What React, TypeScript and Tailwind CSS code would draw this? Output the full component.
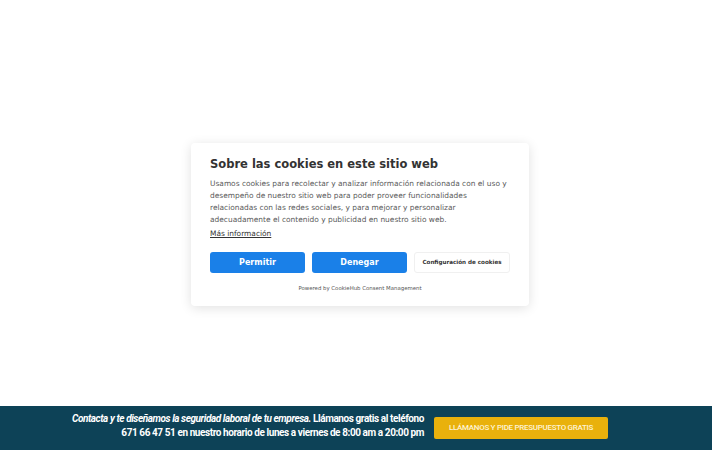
import React from "react";

export default function App() {
  return (
    <div className="relative w-[720px] h-[450px] bg-white overflow-hidden" style={{ fontFamily: '"DejaVu Sans", sans-serif' }}>
      <div className="flex h-[406px] items-start justify-center pt-[143px]">
        <div className="w-[338px] h-[163px] bg-white rounded-[4px] shadow-[0_2px_12px_rgba(0,0,0,0.12)] px-[19px] pt-[13px]">
          <h2 className="text-[11.5px] font-bold text-[#333] leading-[16px]">Sobre las cookies en este sitio web</h2>
          <p className="mt-[6px] text-[7.45px] leading-[12px] text-[#5a5a5a]">
            Usamos cookies para recolectar y analizar información relacionada con el uso y desempeño de nuestro sitio web para poder proveer funcionalidades relacionadas con las redes sociales, y para mejorar y personalizar adecuadamente el contenido y publicidad en nuestro sitio web.
          </p>
          <a className="block mt-[2px] text-[7.45px] leading-[12px] text-[#333] underline">Más información</a>
          <div className="mt-[12px] flex gap-[7px]">
            <button className="w-[95px] h-[21px] rounded-[3px] bg-[#1a80e8] text-white text-[8px] font-bold">Permitir</button>
            <button className="w-[95px] h-[21px] rounded-[3px] bg-[#1a80e8] text-white text-[8px] font-bold">Denegar</button>
            <button className="w-[96px] h-[21px] rounded-[3px] bg-white border border-[#f0f0f0] text-[#333] text-[5.6px] font-bold">Configuración de cookies</button>
          </div>
          <div className="mt-[11px] text-center text-[5.4px] text-[#555]">Powered by CookieHub Consent Management</div>
        </div>
      </div>
      <div className="absolute left-0 bottom-0 w-[712px] h-[44px] bg-[#0d4257] flex items-center">
        <div className="w-[424px] -mt-[4px] text-right text-white text-[10px] leading-[14px] font-bold tracking-[-0.42px]" style={{ fontFamily: 'Roboto, sans-serif' }}>
          <div><i>Contacta y te diseñamos la seguridad laboral de tu empresa.</i> Llámanos gratis al teléfono</div>
          <div>671 66 47 51 en nuestro horario de lunes a viernes de 8:00 am a 20:00 pm</div>
        </div>
        <div className="ml-[10px] w-[174px] h-[22px] bg-[#e9b10c] rounded-[2px] flex items-center justify-center text-[#fdf3d5] text-[8px] font-medium tracking-[-0.3px]" style={{ fontFamily: 'Roboto, sans-serif' }}>
          LLÁMANOS Y PIDE PRESUPUESTO GRATIS
        </div>
      </div>
    </div>
  );
}
